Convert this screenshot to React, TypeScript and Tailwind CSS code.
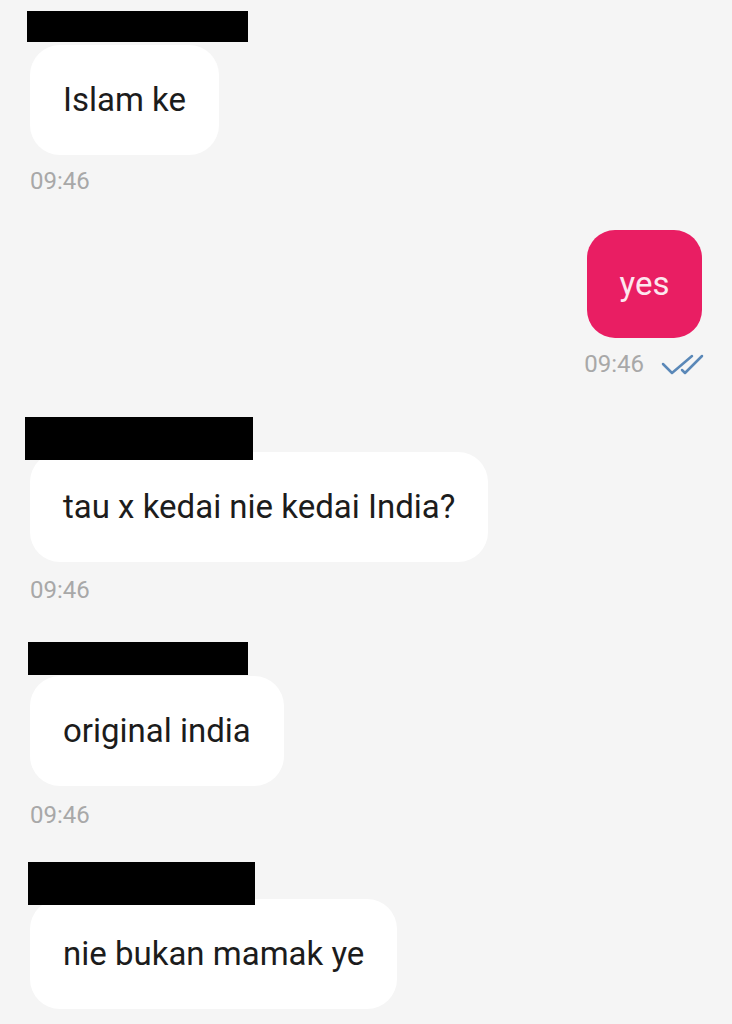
import React from "react";

function Redacted({ w, h, left }: { w: number; h: number; left: number }) {
  return (
    <div
      className="relative z-10 bg-black"
      style={{ width: w, height: h, marginLeft: left }}
    />
  );
}

function Bubble({ text, className }: { text: string; className?: string }) {
  return (
    <div
      className={
        "ml-[30px] self-start h-[110px] flex items-center px-[33px] rounded-[30px] bg-white text-[33px] text-[#1c1c1c] whitespace-nowrap " +
        (className || "")
      }
    >
      {text}
    </div>
  );
}

function Time({ className }: { className?: string }) {
  return (
    <div className={"ml-[30px] text-[24px] leading-[24px] text-[#a8a8a8] " + (className || "")}>
      09:46
    </div>
  );
}

export default function App() {
  return (
    <div
      className="w-[732px] h-[1024px] overflow-hidden bg-[#f5f5f5] flex flex-col"
      style={{ fontFamily: "Roboto, 'Noto Sans', sans-serif" }}
    >
      {/* message 1 */}
      <div className="mt-[11px]">
        <Redacted w={221} h={31} left={27} />
      </div>
      <Bubble text="Islam ke" className="mt-[3px]" />
      <Time className="mt-[14px]" />

      {/* my reply */}
      <div className="self-end mr-[30px] mt-[37px] h-[108px] w-[115px] rounded-[28px] bg-[#e91e63] flex items-center justify-center text-[33px] text-[#fde7ef]">
        yes
      </div>
      <div className="self-end mr-[28px] mt-[14px] flex items-center gap-[16px]">
        <span className="text-[24px] leading-[24px] text-[#a8a8a8]">09:46</span>
        <svg width="44" height="22" viewBox="0 0 44 22" fill="none">
          <path
            d="M3 11 L12 20 L32 3"
            stroke="#5a88b8"
            strokeWidth="2.5"
            strokeLinecap="round"
            strokeLinejoin="round"
          />
          <path
            d="M22 17 L25 20 L42 3"
            stroke="#5a88b8"
            strokeWidth="2.5"
            strokeLinecap="round"
            strokeLinejoin="round"
          />
        </svg>
      </div>

      {/* message 3 */}
      <div className="mt-[41px]">
        <Redacted w={228} h={43} left={25} />
      </div>
      <Bubble text="tau x kedai nie kedai India?" className="mt-[-8px]" />
      <Time className="mt-[16px]" />

      {/* message 4 */}
      <div className="mt-[40px]">
        <Redacted w={220} h={33} left={28} />
      </div>
      <Bubble text="original india" className="mt-[1px]" />
      <Time className="mt-[17px]" />

      {/* message 5 */}
      <div className="mt-[35px]">
        <Redacted w={227} h={43} left={28} />
      </div>
      <Bubble text="nie bukan mamak ye" className="mt-[-6px]" />
    </div>
  );
}
